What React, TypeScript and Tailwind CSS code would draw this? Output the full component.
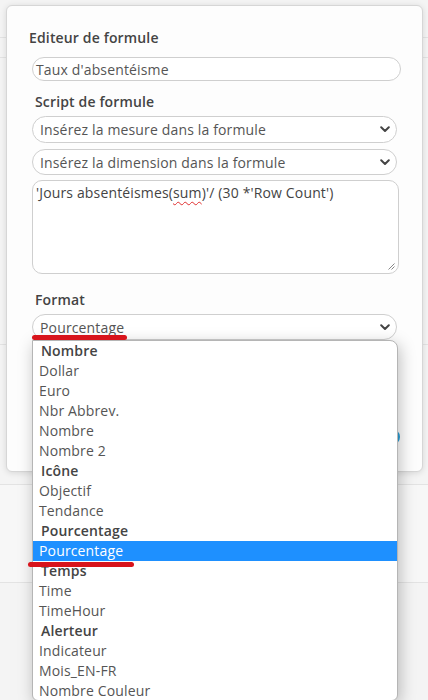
import React from "react";

const font = { fontFamily: '"Open Sans", "Liberation Sans", sans-serif' };

function Chevron() {
    return (
        <svg width="10" height="7" viewBox="0 0 10 7" className="shrink-0">
            <path d="M1.2 1.3 L5 5 L8.8 1.3" fill="none" stroke="#444" strokeWidth="2" strokeLinecap="round" strokeLinejoin="round" />
        </svg>
    );
}

function Select({ label, h = "h-[26px]" }: { label: string; h?: string }) {
    return (
        <div className={`flex w-[365px] items-center justify-between rounded-full border border-[#cfcfcf] bg-white pl-[7px] pr-[6px] text-[14px] text-[#555] ${h}`}>
            <span>{label}</span>
            <Chevron />
        </div>
    );
}

type Opt = { label: string; group?: boolean; selected?: boolean };

const options: Opt[] = [
    { label: "Nombre", group: true },
    { label: "Dollar" },
    { label: "Euro" },
    { label: "Nbr Abbrev." },
    { label: "Nombre" },
    { label: "Nombre 2" },
    { label: "Icône", group: true },
    { label: "Objectif" },
    { label: "Tendance" },
    { label: "Pourcentage", group: true },
    { label: "Pourcentage", selected: true },
    { label: "Temps", group: true },
    { label: "Time" },
    { label: "TimeHour" },
    { label: "Alerteur", group: true },
    { label: "Indicateur" },
    { label: "Mois_EN-FR" },
    { label: "Nombre Couleur" },
];

export default function App() {
    return (
        <div className="relative h-[700px] w-[428px] overflow-hidden bg-[#f4f4f4] tracking-[0.15px]" style={font}>
            {/* page behind the modal */}
            <div className="flex flex-col">
                <div className="h-[38px] border-b border-[#e3e3e3]" />
                <div className="h-[20px] border-b border-[#e3e3e3]" />
                <div className="h-[287px] border-b border-[#e3e3e3]" />
                <div className="h-[140px] border-b border-[#e3e3e3]" />
                <div className="h-[98px] border-b border-[#e3e3e3] bg-[#f7f7f7]" />
            </div>

            {/* modal */}
            <div className="absolute left-[6px] top-[5px] h-[467px] w-[417px] rounded-md border border-[#d6d6d6] bg-[#fdfdfd] shadow-[0_1px_6px_rgba(0,0,0,0.12)]">
                <div className="flex flex-col pl-[25px] pt-[22px]">
                    <div className="-ml-[3px] h-[20px] text-[14px] font-semibold leading-[20px] text-[#444]">Editeur de formule</div>
                    <div className="mt-[9px] flex h-[24px] w-[369px] items-center rounded-full border border-[#cfcfcf] bg-white pl-[3px] text-[14px] text-[#555]">
                        Taux d'absentéisme
                    </div>
                    <div className="ml-[3px] mt-[11px] h-[20px] text-[14px] font-semibold leading-[20px] text-[#444]">Script de formule</div>
                    <div className="mt-[4px]">
                        <Select label="Insérez la mesure dans la formule" h="h-[27px]" />
                    </div>
                    <div className="mt-[6px]">
                        <Select label="Insérez la dimension dans la formule" />
                    </div>
                    <div className="relative mt-[5px] h-[94px] w-[367px] rounded-[10px] border border-[#cfcfcf] bg-white pl-[3px] pt-[2px] text-[14px] leading-[20px] text-[#444]">
                        'Jours absentéismes(
                        <span className="underline decoration-[#e03030] decoration-wavy decoration-1 underline-offset-[3px]">sum</span>
                        )'/ (30 *'Row Count')
                        <svg width="7" height="7" viewBox="0 0 7 7" className="absolute bottom-[3px] right-[3px]">
                            <path d="M6.5 0.5 L0.5 6.5 M6.5 3.5 L3.5 6.5" stroke="#888" strokeWidth="1" />
                        </svg>
                    </div>
                    <div className="ml-[3px] mt-[16px] h-[20px] text-[14px] font-semibold leading-[20px] text-[#444]">Format</div>
                    <div className="mt-[4px]">
                        <Select label="Pourcentage" />
                    </div>
                    <div className="mt-[10px] h-[65px] w-[366px] rounded-md border border-[#cfcfcf] bg-white" />
                    <div className="mt-[13px] flex w-[368px] justify-end">
                        <div className="h-[18px] w-[60px] rounded-full bg-[#2a9fd8]" />
                    </div>
                </div>
            </div>

            {/* open select list */}
            <div className="absolute left-[32px] top-[340px] h-[361px] w-[366px] overflow-hidden rounded-b-md rounded-tr-lg border border-[#b5b5b5] bg-white text-[14px] leading-[20px] shadow-[2px_4px_16px_rgba(0,0,0,0.25)]">
                {options.map((o, i) =>
                    o.group ? (
                        <div key={i} className="h-[20px] pl-[8px] font-semibold text-[#444]">
                            {o.label}
                        </div>
                    ) : (
                        <div key={i} className={`h-[20px] pl-[6px] ${o.selected ? "bg-[#1e90ff] text-white" : "text-[#555]"}`}>
                            {o.label}
                        </div>
                    )
                )}
            </div>

            {/* red markers */}
            <div className="absolute left-[32px] top-[335px] h-[5px] w-[95px] rounded-full bg-[#d8141c]" />
            <div className="absolute left-[28px] top-[562px] h-[5px] w-[106px] rounded-full bg-[#d8141c]" />
        </div>
    );
}
